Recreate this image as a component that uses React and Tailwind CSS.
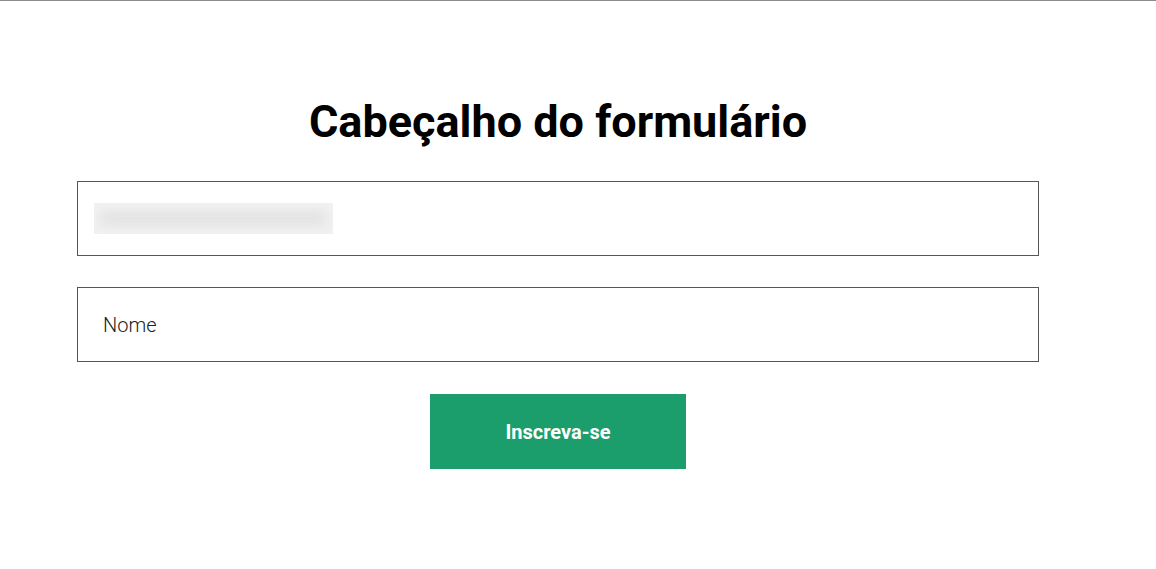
export default function App() {
  return (
    <div className="min-h-[569px] bg-white border-t border-[#8c8c8c] font-['Roboto',sans-serif]">
      <div className="w-[962px] ml-[77px] pt-[95px] flex flex-col items-center">
        <h1 className="text-[45px] leading-[52px] font-bold text-black">Cabeçalho do formulário</h1>

        <div className="mt-[33px] w-full h-[75px] border border-[#555] flex items-center px-[16px]">
          {/* blurred field value */}
          <div className="relative w-[239px] h-[31px] bg-[#f2f2f2] overflow-hidden">
            <div className="absolute inset-x-[6px] inset-y-[8px] bg-[#e2e2e2] blur-[6px]" />
          </div>
        </div>

        <div className="mt-[31px] w-full h-[75px] border border-[#555] flex items-center px-[25px]">
          <span className="text-[20px] font-light text-[#222]">Nome</span>
        </div>

        <button className="mt-[32px] w-[256px] h-[75px] bg-[#1b9e6b] text-white text-[20px] font-bold">
          Inscreva-se
        </button>
      </div>
    </div>
  );
}
